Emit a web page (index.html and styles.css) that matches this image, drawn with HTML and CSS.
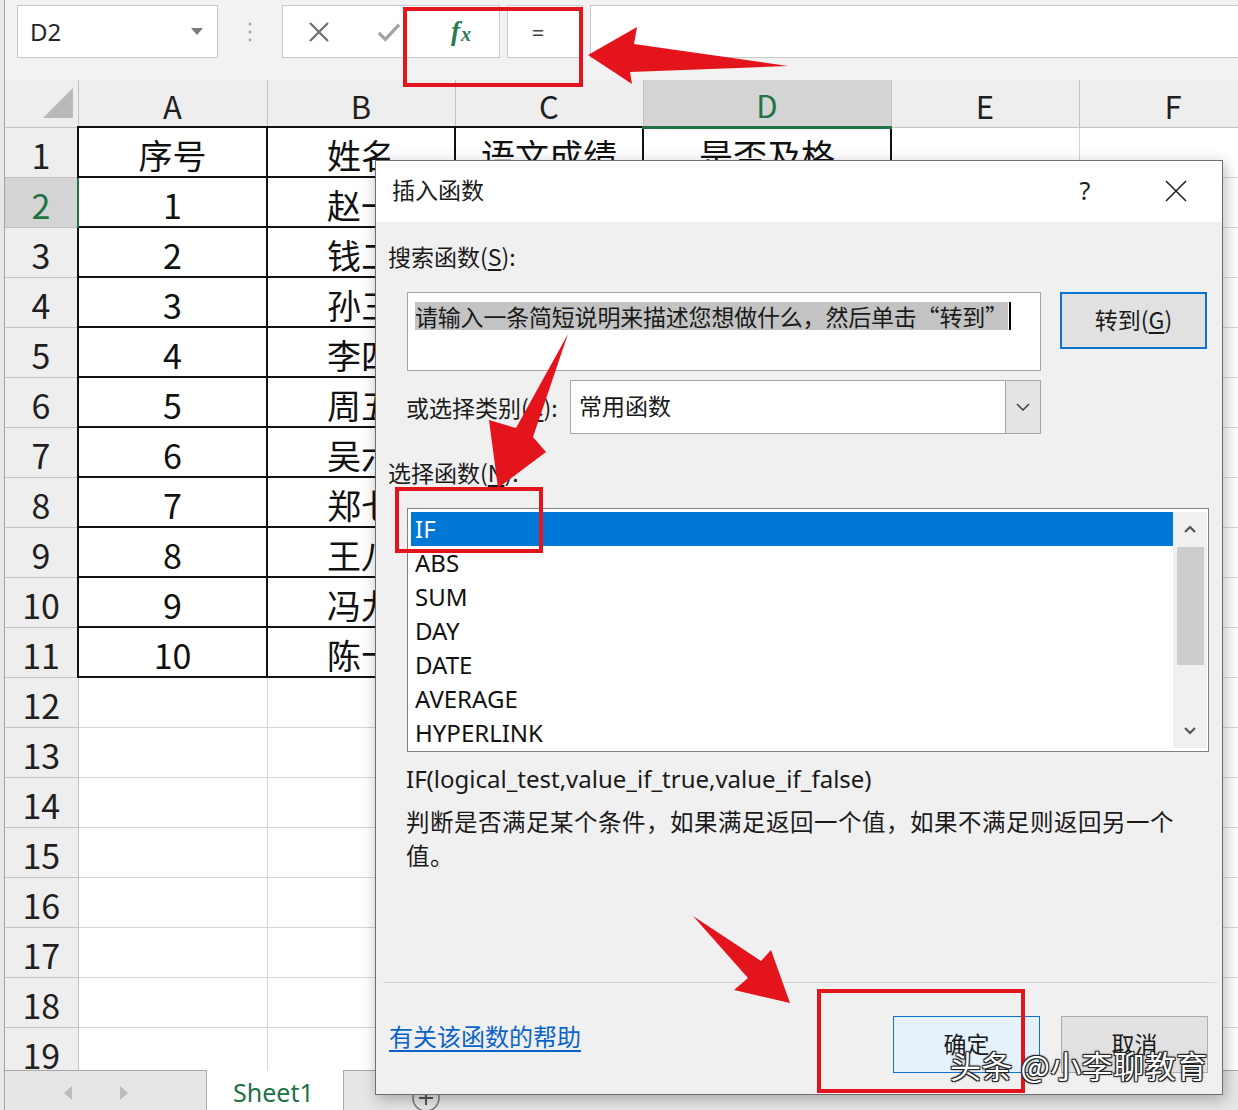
FILE: index.html
```html
<!DOCTYPE html>
<html lang="zh-CN">
<head>
    <meta charset="UTF-8">
    <meta name="viewport" content="width=device-width, initial-scale=1.0">
    <title>插入函数</title>
    <link rel="stylesheet" href="styles.css">
</head>
<body>
<div class="excel">
    <div class="main">
        <div class="formula-bar">
            <div class="name-box">
                <span>D2</span>
                <svg width="12" height="8" viewBox="0 0 12 8"><path d="M0 0h12L6 7z" fill="#7a7a7a"/></svg>
            </div>
            <div class="grip">
                <svg width="4" height="20" viewBox="0 0 4 20"><circle cx="2" cy="2" r="1.4" fill="#a6a6a6"/><circle cx="2" cy="10" r="1.4" fill="#a6a6a6"/><circle cx="2" cy="18" r="1.4" fill="#a6a6a6"/></svg>
            </div>
            <div class="tools">
                <span class="tool">
                    <svg width="22" height="22" viewBox="0 0 22 22"><path d="M2 2l18 18M20 2L2 20" stroke="#6e6e6e" stroke-width="2.2"/></svg>
                </span>
                <span class="tool">
                    <svg width="26" height="22" viewBox="0 0 26 22"><path d="M2 12l7 7L24 3" stroke="#a3a3a3" stroke-width="3.6" fill="none"/></svg>
                </span>
                <span class="tool fx"><i>f</i><i class="sub">x</i></span>
            </div>
            <div class="eq-box">=</div>
            <div class="formula-input"></div>
        </div>

        <div class="sheet">
            <table class="grid">
                <colgroup>
                    <col style="width:73px"><col style="width:189px"><col style="width:188px"><col style="width:188px"><col style="width:248px"><col style="width:188px"><col style="width:188px">
                </colgroup>
                <tr class="col-head">
                    <th class="corner"><svg width="30" height="30" viewBox="0 0 30 30"><path d="M30 0v30H0z" fill="#b9b9b9"/></svg></th>
                    <th>A</th><th>B</th><th>C</th><th class="sel-col">D</th><th>E</th><th>F</th>
                </tr>
                <tr><th class="rh">1</th><td class="t">序号</td><td class="t">姓名</td><td class="t">语文成绩</td><td class="t">是否及格</td><td></td><td></td></tr>
                <tr><th class="rh sel-row">2</th><td class="t">1</td><td class="t">赵一</td><td class="t">85</td><td class="t"></td><td></td><td></td></tr>
                <tr><th class="rh">3</th><td class="t">2</td><td class="t">钱二</td><td class="t">56</td><td class="t"></td><td></td><td></td></tr>
                <tr><th class="rh">4</th><td class="t">3</td><td class="t">孙三</td><td class="t">92</td><td class="t"></td><td></td><td></td></tr>
                <tr><th class="rh">5</th><td class="t">4</td><td class="t">李四</td><td class="t">48</td><td class="t"></td><td></td><td></td></tr>
                <tr><th class="rh">6</th><td class="t">5</td><td class="t">周五</td><td class="t">77</td><td class="t"></td><td></td><td></td></tr>
                <tr><th class="rh">7</th><td class="t">6</td><td class="t">吴六</td><td class="t">63</td><td class="t"></td><td></td><td></td></tr>
                <tr><th class="rh">8</th><td class="t">7</td><td class="t">郑七</td><td class="t">59</td><td class="t"></td><td></td><td></td></tr>
                <tr><th class="rh">9</th><td class="t">8</td><td class="t">王八</td><td class="t">88</td><td class="t"></td><td></td><td></td></tr>
                <tr><th class="rh">10</th><td class="t">9</td><td class="t">冯九</td><td class="t">70</td><td class="t"></td><td></td><td></td></tr>
                <tr><th class="rh">11</th><td class="t">10</td><td class="t">陈十</td><td class="t">95</td><td class="t"></td><td></td><td></td></tr>
                <tr><th class="rh">12</th><td></td><td></td><td></td><td></td><td></td><td></td></tr>
                <tr><th class="rh">13</th><td></td><td></td><td></td><td></td><td></td><td></td></tr>
                <tr><th class="rh">14</th><td></td><td></td><td></td><td></td><td></td><td></td></tr>
                <tr><th class="rh">15</th><td></td><td></td><td></td><td></td><td></td><td></td></tr>
                <tr><th class="rh">16</th><td></td><td></td><td></td><td></td><td></td><td></td></tr>
                <tr><th class="rh">17</th><td></td><td></td><td></td><td></td><td></td><td></td></tr>
                <tr><th class="rh">18</th><td></td><td></td><td></td><td></td><td></td><td></td></tr>
                <tr><th class="rh">19</th><td></td><td></td><td></td><td></td><td></td><td></td></tr>
            </table>
        </div>

        <div class="tabs">
            <div class="tab-nav">
                <svg width="8" height="14" viewBox="0 0 8 14"><path d="M8 0v14L0 7z" fill="#bcbcbc"/></svg>
                <svg width="8" height="14" viewBox="0 0 8 14"><path d="M0 0v14l8-7z" fill="#bcbcbc"/></svg>
            </div>
            <div class="tab active">Sheet1</div>
            <div class="tab-rest">
                <svg class="add" width="30" height="30" viewBox="0 0 30 30"><circle cx="15" cy="15" r="13" fill="none" stroke="#777" stroke-width="1.5"/><path d="M15 8v14M8 15h14" stroke="#555" stroke-width="2"/></svg>
            </div>
        </div>
    </div>

    <!-- Insert Function dialog -->
    <div class="dialog">
        <div class="dlg-title">
            <span class="dlg-name">插入函数</span>
            <span class="dlg-help">?</span>
            <span class="dlg-close">
                <svg width="22" height="22" viewBox="0 0 22 22"><path d="M1 1l20 20M21 1L1 21" stroke="#222" stroke-width="1.6"/></svg>
            </span>
        </div>
        <div class="dlg-body">
            <div class="label">搜索函数(<u>S</u>):</div>
            <div class="search-row">
                <div class="search-box">
                    <span class="sel-text">请输入一条简短说明来描述您想做什么，然后单击“转到”</span><span class="caret"></span>
                </div>
                <button class="btn btn-go">转到(<u>G</u>)</button>
            </div>
            <div class="cat-row">
                <span class="label cat-label">或选择类别(<u>C</u>):</span>
                <div class="select">
                    <span>常用函数</span>
                    <span class="select-btn">
                        <svg width="14" height="8" viewBox="0 0 14 8"><path d="M1 1l6 6 6-6" stroke="#333" stroke-width="1.4" fill="none"/></svg>
                    </span>
                </div>
            </div>
            <div class="label pick-label">选择函数(<u>N</u>):</div>
            <div class="listbox">
                <ul class="items">
                    <li class="active">IF</li>
                    <li>ABS</li>
                    <li>SUM</li>
                    <li>DAY</li>
                    <li>DATE</li>
                    <li>AVERAGE</li>
                    <li>HYPERLINK</li>
                </ul>
                <div class="scrollbar">
                    <span class="sb-btn"><svg width="12" height="8" viewBox="0 0 12 8"><path d="M1 7l5-5 5 5" stroke="#555" stroke-width="2.2" fill="none"/></svg></span>
                    <span class="sb-thumb"></span>
                    <span class="sb-btn sb-down"><svg width="12" height="8" viewBox="0 0 12 8"><path d="M1 1l5 5 5-5" stroke="#555" stroke-width="2.2" fill="none"/></svg></span>
                </div>
            </div>
            <div class="signature">IF(logical_test,value_if_true,value_if_false)</div>
            <p class="desc">判断是否满足某个条件，如果满足返回一个值，如果不满足则返回另一个值。</p>
        </div>
        <div class="dlg-footer">
            <a class="help-link" href="#">有关该函数的帮助</a>
            <button class="btn btn-ok">确定</button>
            <button class="btn btn-cancel">取消</button>
        </div>
    </div>

    <!-- red annotations -->
    <svg class="marks" width="1238" height="1110" viewBox="0 0 1238 1110">
        <g fill="#e4141c">
            <polygon points="588,55 637,27 634,44 788,66 630,72 632,84"/>
            <polygon points="568,334 533,437 546,452 498,488 489,420 516,428"/>
            <polygon points="693,916 761,961 771,950 790,1003 734,990 748,978"/>
        </g>
        <g fill="none" stroke="#e4141c" stroke-width="4">
            <rect x="405" y="9" width="176" height="76"/>
            <rect x="397" y="489" width="144" height="62"/>
            <rect x="819" y="991" width="204" height="100"/>
        </g>
    </svg>
    <div class="watermark">头条 @小李聊教育</div>
</div>
</body>
</html>
```

FILE: styles.css
```css
* {
    box-sizing: border-box;
}
body {
    margin: 0;
    font-family: "Noto Sans", "Noto Sans CJK SC", sans-serif;
    color: #1a1a1a;
}
.excel {
    position: relative;
    width: 1238px;
    height: 1110px;
    overflow: hidden;
    background: #e8e8e8;
    padding-left: 4px;
}
.main {
    height: 100%;
    border-left: 1px solid #a3a3a3;
    background: #f2f2f2;
    display: flex;
    flex-direction: column;
}

/* formula bar */
.formula-bar {
    height: 80px;
    flex: none;
    display: flex;
    align-items: flex-start;
    padding: 5px 0 0 12px;
}
.name-box {
    width: 201px;
    height: 53px;
    background: #fff;
    border: 1px solid #c9c9c9;
    display: flex;
    align-items: center;
    justify-content: space-between;
    padding: 0 14px 0 12px;
    font-size: 24px;
    color: #262626;
}
.grip {
    width: 64px;
    height: 53px;
    display: flex;
    align-items: center;
    justify-content: center;
}
.tools {
    width: 218px;
    height: 53px;
    background: #fff;
    border: 1px solid #c9c9c9;
    display: flex;
    align-items: center;
    padding-left: 24px;
}
.tool {
    display: flex;
    align-items: center;
    justify-content: center;
    width: 24px;
    margin-right: 46px;
}
.tool.fx {
    margin-left: 2px;
    margin-right: 0;
    font-family: "Liberation Serif", serif;
    font-size: 27px;
    font-weight: bold;
    color: #2b7a55;
}
.fx .sub {
    font-size: 20px;
    margin-left: 1px;
    position: relative;
    top: 3px;
}
.eq-box {
    width: 76px;
    height: 53px;
    margin-left: 7px;
    background: #fff;
    border: 1px solid #c9c9c9;
    display: flex;
    align-items: center;
    justify-content: center;
    padding-right: 14px;
    font-size: 22px;
    color: #444;
}
.formula-input {
    flex: 1;
    height: 53px;
    margin-left: 7px;
    background: #fff;
    border: 1px solid #c9c9c9;
    border-right: none;
}

/* sheet */
.sheet {
    flex: 1;
    overflow: hidden;
    background: #fff;
}
.grid {
    border-collapse: collapse;
    table-layout: fixed;
    width: 1262px;
    font-family: "Noto Sans CJK SC", sans-serif;
}
.grid th {
    background: #eeeeee;
    border: 1px solid #c2c2c2;
    font-weight: normal;
    color: #1f1f1f;
    padding: 0;
}
.col-head th {
    height: 47px;
    font-size: 31px;
    border-top: none;
    line-height: 1;
    padding-top: 4px;
}
.col-head .corner {
    border-left: none;
    text-align: right;
    vertical-align: bottom;
    padding: 0 5px 7px 0;
}
.col-head .sel-col {
    background: #d4d4d4;
    color: #217346;
    border-bottom: 3px solid #217346;
}
.rh {
    height: 50px;
    font-size: 34px;
    line-height: 1;
    padding-top: 6px !important;
    border-left: none !important;
}
.rh.sel-row {
    background: #d4d4d4;
    color: #217346;
    border-right: 2px solid #217346;
}
.grid td {
    border: 1px solid #d6d6d6;
    height: 50px;
    padding: 6px 0 0;
    font-size: 34px;
    line-height: 1;
    text-align: center;
    color: #111;
    white-space: nowrap;
}
.grid td.t {
    border: 2px solid #111;
}

/* sheet tabs */
.tabs {
    height: 40px;
    flex: none;
    display: flex;
    background: #e6e6e6;
}
.tab-nav {
    width: 202px;
    border-top: 1px solid #a9a9a9;
    border-right: 1px solid #a9a9a9;
    display: flex;
    align-items: center;
    gap: 48px;
    padding: 4px 0 0 59px;
}
.tab {
    width: 136px;
    background: #fff;
    color: #217346;
    font-family: "Noto Sans", sans-serif;
    font-size: 25px;
    padding: 5px 0 0 26px;
}
.tab-rest {
    flex: 1;
    border-top: 1px solid #a9a9a9;
    border-left: 1px solid #a9a9a9;
    padding: 12px 0 0 67px;
}

/* dialog */
.dialog {
    position: absolute;
    left: 375px;
    top: 160px;
    width: 848px;
    height: 935px;
    background: #f0f0f0;
    border: 1px solid #6e6e6e;
    box-shadow: 2px 4px 14px rgba(0, 0, 0, 0.28);
    display: flex;
    flex-direction: column;
    font-family: "Noto Sans", "Noto Sans CJK SC", sans-serif;
    color: #1a1a1a;
}
.dlg-title {
    height: 61px;
    flex: none;
    background: #fff;
    display: flex;
    align-items: center;
    padding: 0 26px 0 16px;
}
.dlg-name {
    font-family: "Noto Sans CJK SC", sans-serif;
    font-size: 23px;
    padding-bottom: 6px;
}
.dlg-help {
    margin-left: auto;
    width: 30px;
    text-align: center;
    font-size: 25px;
    padding-bottom: 4px;
}
.dlg-close {
    width: 40px;
    margin-left: 56px;
    display: flex;
    justify-content: center;
    padding-bottom: 2px;
}
.dlg-body {
    flex: 1;
    padding: 19px 0 0 12px;
    display: flex;
    flex-direction: column;
    align-items: flex-start;
}
.label {
    font-family: "Noto Sans CJK SC", sans-serif;
    font-size: 23px;
    line-height: 30px;
}
.label u {
    text-underline-offset: 3px;
}
.search-row {
    display: flex;
    align-items: flex-start;
    margin: 21px 0 0 19px;
}
.search-box {
    width: 634px;
    height: 79px;
    background: #fff;
    border: 1px solid #a5a5a5;
    padding: 9px 0 0 7px;
    display: flex;
    align-items: flex-start;
    white-space: nowrap;
}
.sel-text {
    font-family: "Noto Sans CJK SC", sans-serif;
    font-size: 23px;
    line-height: 28px;
    background: #c3c3c3;
    letter-spacing: -0.2px;
}
.caret {
    width: 2px;
    height: 28px;
    background: #000;
    margin-left: 1px;
}
.btn {
    width: 147px;
    height: 57px;
    font-family: "Noto Sans CJK SC", sans-serif;
    font-size: 23px;
    color: #1a1a1a;
    background: #e1e1e1;
    border: 1px solid #adadad;
    padding: 0 0 4px;
}
.btn-go {
    margin-left: 19px;
    border: 2px solid #0a74d0;
}
.btn u {
    text-underline-offset: 3px;
}
.cat-row {
    display: flex;
    align-items: center;
    margin: 9px 0 0 18px;
}
.cat-label {
    width: 164px;
}
.select {
    width: 471px;
    height: 54px;
    background: #fff;
    border: 1px solid #a5a5a5;
    display: flex;
    align-items: center;
    justify-content: space-between;
    padding: 0 0 0 8px;
    font-family: "Noto Sans CJK SC", sans-serif;
    font-size: 23px;
}
.select span:first-child {
    padding-bottom: 4px;
}
.select-btn {
    width: 35px;
    height: 100%;
    background: #e4e4e4;
    border-left: 1px solid #a5a5a5;
    display: flex;
    align-items: center;
    justify-content: center;
}
.pick-label {
    margin-top: 23px;
}
.listbox {
    width: 802px;
    height: 244px;
    margin: 21px 0 0 19px;
    background: #fff;
    border: 1px solid #828282;
    padding: 3px 1px 3px 3px;
    display: flex;
}
.items {
    flex: 1;
    list-style: none;
    margin: 0;
    padding: 0;
}
.items li {
    height: 34px;
    line-height: 34px;
    padding-left: 4px;
    font-size: 24px;
    color: #111;
}
.items li.active {
    background: #0078d7;
    color: #fff;
}
.scrollbar {
    width: 34px;
    background: #f0f0f0;
    display: flex;
    flex-direction: column;
    align-items: center;
}
.sb-btn {
    height: 34px;
    width: 100%;
    display: flex;
    align-items: center;
    justify-content: center;
}
.sb-down {
    margin-top: auto;
}
.sb-thumb {
    width: 27px;
    height: 118px;
    margin-top: 1px;
    background: #cdcdcd;
}
.signature {
    margin: 12px 0 0 18px;
    font-size: 24px;
    line-height: 30px;
}
.desc {
    width: 780px;
    margin: 10px 0 0 18px;
    font-family: "Noto Sans CJK SC", sans-serif;
    font-size: 23.5px;
    line-height: 34px;
    letter-spacing: 0.5px;
}
.dlg-footer {
    flex: none;
    margin: 0 7px;
    border-top: 1px solid #d2d2d2;
    height: 112px;
    display: flex;
    align-items: flex-start;
    padding: 33px 7px 0 6px;
}
.help-link {
    font-family: "Noto Sans CJK SC", sans-serif;
    font-size: 24px;
    color: #0a64c8;
    text-underline-offset: 4px;
    margin-top: 2px;
}
.btn-ok {
    margin-left: auto;
    background: #e5f1fb;
    border: 1px solid #0a74d0;
}
.btn-cancel {
    margin-left: 21px;
}

/* overlay */
.marks {
    position: absolute;
    left: 0;
    top: 0;
    pointer-events: none;
}
.watermark {
    position: absolute;
    left: 950px;
    top: 1046px;
    font-family: "Noto Sans CJK SC", sans-serif;
    font-size: 31px;
    line-height: 38px;
    color: #fff;
    letter-spacing: 0.5px;
    text-shadow: 1px 1px 0 #222, -1px -1px 0 #222, 1px -1px 0 #222, -1px 1px 0 #222, 0 0 3px #000;
}
```
